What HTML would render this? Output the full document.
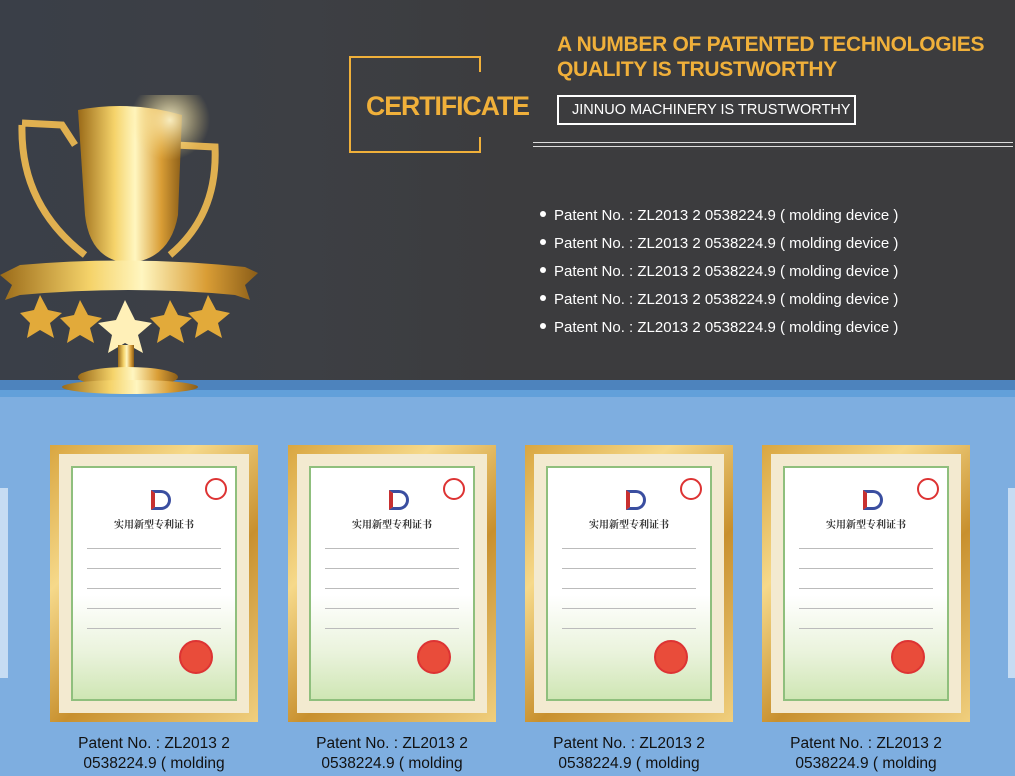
<!DOCTYPE html>
<html><head><meta charset="utf-8"><style>
*{margin:0;padding:0;box-sizing:border-box}
body{width:1015px;height:776px;overflow:hidden;background:#7eaee0;font-family:"Liberation Sans","Noto Sans CJK SC",sans-serif;position:relative}
.top{position:absolute;left:0;top:0;width:1015px;height:380px;background:linear-gradient(90deg,#3a3f48 0%,#3d3f44 30%,#3c3c3e 50%,#3c3c3e 100%)}
.b1{position:absolute;left:0;top:380px;width:1015px;height:10px;background:#4d83bd}
.b2{position:absolute;left:0;top:390px;width:1015px;height:7px;background:#62a0da}
.frame{position:absolute;left:349px;top:56px;width:130px;height:97px;border:2px solid #f0b03a;border-right:none}
.frame:before,.frame:after{content:"";position:absolute;right:-2px;width:2px;height:16px;background:#f0b03a}
.frame:before{top:-2px}.frame:after{bottom:-2px}
.cert{position:absolute;left:366px;top:91px;font-size:27px;font-weight:bold;color:#f0b03a;letter-spacing:-1px;transform:scaleX(.985);transform-origin:left}
.h1{position:absolute;left:557px;top:32px;font-size:21px;font-weight:bold;color:#f0b03a;line-height:25px;letter-spacing:-0.3px}
.box{position:absolute;left:557px;top:95px;width:299px;height:30px;border:2px solid #fff;color:#fff;font-size:14.5px;line-height:26px;padding-left:13px}
.ln{position:absolute;left:533px;width:480px;height:1px;background:#ddd}
ul{position:absolute;left:540px;top:206px;list-style:none;color:#fff;font-size:15px}
li{height:28px;line-height:20px}
li:before{content:"";display:inline-block;width:6px;height:6px;border-radius:50%;background:#fff;margin-right:8px;vertical-align:middle;position:relative;top:-2px}
.card{position:absolute;top:445px;width:208px;height:277px;background:linear-gradient(135deg,#d9a640,#f6d98a 30%,#c8902e 60%,#f0cf7e);padding:9px}
.card .in{width:100%;height:100%;background:#f3ead0;padding:12px}
.card .paper{width:100%;height:100%;background:linear-gradient(#fff 55%,#eaf3dc 80%,#cfe6b4);border:2px solid #8fbf7d;position:relative;text-align:center}
.t{position:absolute;top:48px;left:0;right:0;font-size:10px;font-weight:bold;color:#333;font-family:"Noto Serif CJK SC",serif}
.logo{position:absolute;top:22px;left:78px;width:20px;height:20px;border:3px solid #3a4ea0;border-radius:0 50% 50% 0;border-left:4px solid #c83030}
.seal{position:absolute;border-radius:50%;border:2px solid #d33;}
.lines{position:absolute;left:14px;right:14px;height:1px;background:#bbb}
.cap{position:absolute;top:734px;width:208px;text-align:center;font-size:15.5px;line-height:20px;color:#111}
.side{position:absolute;left:0;top:488px;width:8px;height:190px;background:#c6dcf3}
.side2{position:absolute;left:1008px;top:488px;width:7px;height:190px;background:#c6dcf3}
</style></head><body>
<div class="top"></div>
<div class="b1"></div><div class="b2"></div>
<svg style="position:absolute;left:0;top:95px" width="270" height="305" viewBox="0 0 270 305">
<defs>
<linearGradient id="g" x1="0" x2="1"><stop offset="0" stop-color="#9a6a18"/><stop offset=".35" stop-color="#f5d36a"/><stop offset=".55" stop-color="#fff6c0"/><stop offset=".8" stop-color="#d99d35"/><stop offset="1" stop-color="#8a5d18"/></linearGradient>
<radialGradient id="gl"><stop offset="0" stop-color="#fff8d0" stop-opacity=".9"/><stop offset="1" stop-color="#ffe080" stop-opacity="0"/></radialGradient>
</defs>
<path d="M22 28 L62 30 L75 50 M22 30 Q20 110 85 160" stroke="#e0b050" stroke-width="7" fill="none"/>
<path d="M175 50 L215 52 Q218 120 170 160" stroke="#e0b050" stroke-width="7" fill="none"/>
<path d="M78 15 Q130 5 182 20 L178 120 Q170 165 128 168 Q90 165 85 120 Z" fill="url(#g)"/>
<circle cx="170" cy="25" r="40" fill="url(#gl)"/>
<path d="M0 180 L20 170 Q130 160 245 172 L258 178 L245 190 L250 205 L235 200 Q130 190 20 200 L5 205 L12 190 Z" fill="url(#g)"/>
<g fill="#e2aa3a"><polygon points="40,200 48,215 62,218 50,228 54,243 40,235 27,243 30,228 20,218 34,215"/><polygon points="80,205 88,220 102,223 90,233 94,248 80,240 67,248 70,233 60,223 74,220"/><polygon points="170,205 178,220 192,223 180,233 184,248 170,240 157,248 160,233 150,223 164,220"/><polygon points="208,200 216,215 230,218 218,228 222,243 208,235 195,243 198,228 188,218 202,215"/><polygon points="125,205 135,225 152,228 138,240 143,258 125,248 108,258 112,240 98,228 116,225" fill="#fff0b8"/></g>
<rect x="118" y="250" width="16" height="25" fill="url(#g)"/>
<ellipse cx="128" cy="282" rx="50" ry="10" fill="url(#g)"/>
<ellipse cx="130" cy="292" rx="68" ry="7" fill="url(#g)"/>
</svg>
<div class="frame"></div>
<div class="cert">CERTIFICATE</div>
<div class="h1">A NUMBER OF PATENTED TECHNOLOGIES<br>QUALITY IS TRUSTWORTHY</div>
<div class="box">JINNUO MACHINERY IS TRUSTWORTHY</div>
<div class="ln" style="top:142px"></div><div class="ln" style="top:146px"></div>
<ul>
<li>Patent No. : ZL2013 2 0538224.9 ( molding device )</li>
<li>Patent No. : ZL2013 2 0538224.9 ( molding device )</li>
<li>Patent No. : ZL2013 2 0538224.9 ( molding device )</li>
<li>Patent No. : ZL2013 2 0538224.9 ( molding device )</li>
<li>Patent No. : ZL2013 2 0538224.9 ( molding device )</li>
</ul>
<div class="side"></div><div class="side2"></div>
<div class="card" style="left:50px"><div class="in"><div class="paper"><div class="logo"></div><div class="t">实用新型专利证书</div><div class="seal" style="right:8px;top:10px;width:22px;height:22px"></div><div class="lines" style="top:80px"></div><div class="lines" style="top:100px"></div><div class="lines" style="top:120px"></div><div class="lines" style="top:140px"></div><div class="lines" style="top:160px"></div><div class="seal" style="right:22px;top:172px;width:34px;height:34px;background:#e94c3a"></div></div></div></div>
<div class="card" style="left:288px"><div class="in"><div class="paper"><div class="logo"></div><div class="t">实用新型专利证书</div><div class="seal" style="right:8px;top:10px;width:22px;height:22px"></div><div class="lines" style="top:80px"></div><div class="lines" style="top:100px"></div><div class="lines" style="top:120px"></div><div class="lines" style="top:140px"></div><div class="lines" style="top:160px"></div><div class="seal" style="right:22px;top:172px;width:34px;height:34px;background:#e94c3a"></div></div></div></div>
<div class="card" style="left:525px"><div class="in"><div class="paper"><div class="logo"></div><div class="t">实用新型专利证书</div><div class="seal" style="right:8px;top:10px;width:22px;height:22px"></div><div class="lines" style="top:80px"></div><div class="lines" style="top:100px"></div><div class="lines" style="top:120px"></div><div class="lines" style="top:140px"></div><div class="lines" style="top:160px"></div><div class="seal" style="right:22px;top:172px;width:34px;height:34px;background:#e94c3a"></div></div></div></div>
<div class="card" style="left:762px"><div class="in"><div class="paper"><div class="logo"></div><div class="t">实用新型专利证书</div><div class="seal" style="right:8px;top:10px;width:22px;height:22px"></div><div class="lines" style="top:80px"></div><div class="lines" style="top:100px"></div><div class="lines" style="top:120px"></div><div class="lines" style="top:140px"></div><div class="lines" style="top:160px"></div><div class="seal" style="right:22px;top:172px;width:34px;height:34px;background:#e94c3a"></div></div></div></div>
<div class="cap" style="left:50px">Patent No. : ZL2013 2<br>0538224.9 ( molding</div>
<div class="cap" style="left:288px">Patent No. : ZL2013 2<br>0538224.9 ( molding</div>
<div class="cap" style="left:525px">Patent No. : ZL2013 2<br>0538224.9 ( molding</div>
<div class="cap" style="left:762px">Patent No. : ZL2013 2<br>0538224.9 ( molding</div>
</body></html>
